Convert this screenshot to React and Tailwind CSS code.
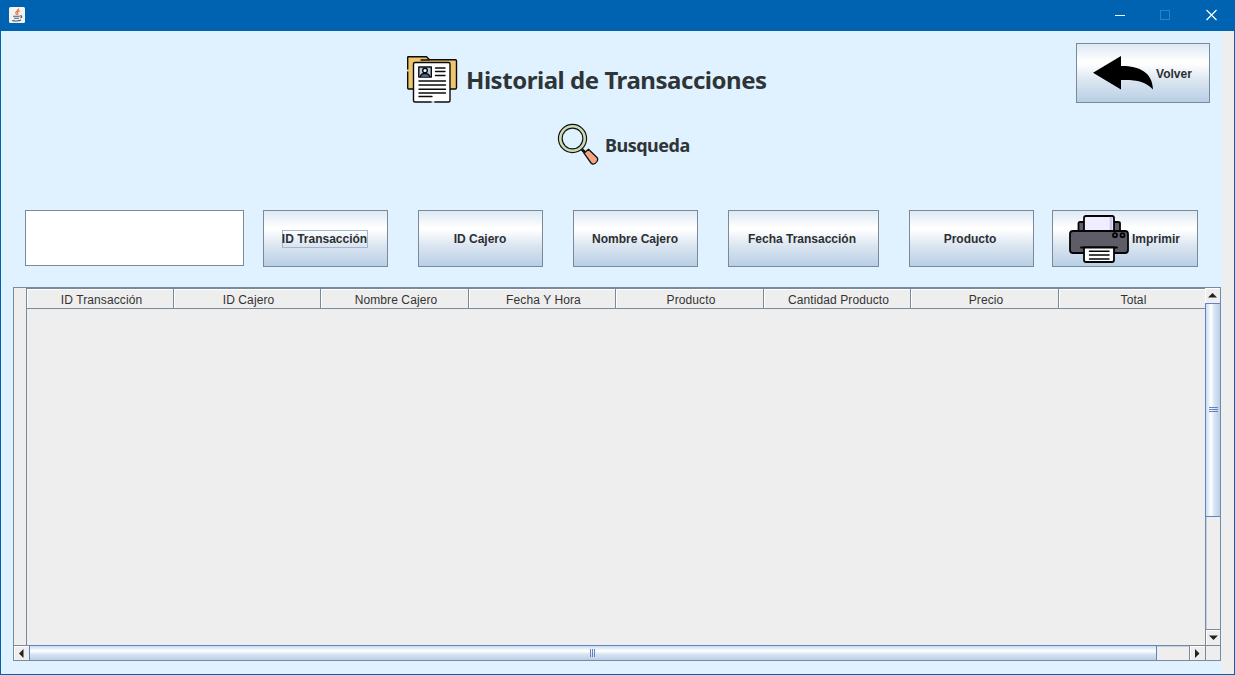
import React from "react";

const buttonBase =
  "flex shrink-0 items-center justify-center whitespace-nowrap border border-[#7a8a99] bg-[linear-gradient(to_bottom,#dde8f3_0%,#ffffff_30%,#ffffff_34%,#dce6f1_62%,#b8cfe5_100%)] text-[12px] font-bold leading-[15px] text-[#2b2f33]";

function JavaIcon() {
  return (
    <svg width="16" height="16" viewBox="0 0 16 16" fill="none" className="-mt-px">
      <rect width="16" height="16" rx="1.5" fill="#f3f3f1" />
      <path d="M9.6 1.5C10 3.6 6.3 4.2 6.7 6c.1.6.7 1 .9 1.6M11 3.8C8.400 4.800 8 5.500 8.700 6.400c.4.5.3 1-.3 1.500" stroke="#e8743b" strokeWidth="1.2" />
      <path d="M4 9.200h6.800M5 11.300h5M3.200 13.500c2 .8 6.800.7 8.800-.4M11 9c2.200-.8 2.400 1.400.3 2" stroke="#4a5f70" strokeWidth="1.100" />
    </svg>
  );
}

function FolderIcon() {
  return (
    <svg width="52" height="50" viewBox="0 0 52 50" fill="none" stroke="#0b0b0b" strokeWidth="1.4" strokeLinejoin="round" strokeLinecap="round">
      <path d="M1.700 14V2.200Q1.700 1.700 2.200 1.700H20.500L23.500 4.800H49.500Q50.500 4.800 50.500 6V32.500Q50.500 34 49.300 34H2.500Q1.700 34 1.700 33V17" fill="#efc56e" />
      <path d="M15 5H23" />
      <path d="M9 7.500H42.500Q44 7.500 44 9V45.500Q44 47 42.500 47H9Q7.500 47 7.500 45.500V9Q7.500 7.500 9 7.500Z" fill="#fff" />
      <rect x="12.800" y="12" width="12.500" height="10" fill="#b7cde0" />
      <circle cx="19" cy="15.500" r="2.300" fill="#fff" />
      <path d="M14.500 21.500Q15 18.500 19 18.500T23.500 21.500" fill="#52739c" />
      <path d="M29.500 13H39M29.500 16.500H39M29.500 20.500H39M13 26H39.500M13 30H39.500M13 34.200H39.500M13 38H39.500M13 41.500H26" />
      <path d="M26 47h2" stroke="#fff" />
    </svg>
  );
}

function MagnifierIcon() {
  return (
    <svg width="42" height="43" viewBox="0 0 42 43" fill="none" stroke="#111" strokeWidth="1.3" strokeLinejoin="round" className="-ml-px mr-px">
      <path d="M25 26.500L28 29.500" strokeWidth="3" />
      <path d="M27 30.200L31.500 26.300L40 34.500Q41.400 36 40 38.500Q38 41.500 35.500 41Q34.700 40.800 34 40Z" fill="#f5a583" />
      <circle cx="15.500" cy="15.500" r="12.200" stroke="#111" strokeWidth="4.900" />
      <circle cx="15.500" cy="15.500" r="12.200" stroke="#cbdcb4" strokeWidth="2.600" />
    </svg>
  );
}

function BackIcon() {
  return (
    <svg width="60" height="34" viewBox="0 0 60 34" fill="#000">
      <path d="M0 16.700L28 0V10C45 9.700 59.500 15.500 60 33.500C52.500 25.500 43 23.500 28 24V33.500Z" />
    </svg>
  );
}

function PrinterIcon() {
  return (
    <svg width="60" height="48" viewBox="0 0 60 48" fill="none" stroke="#050505" strokeWidth="1.800" strokeLinejoin="round" strokeLinecap="round">
      <path d="M9.500 16V8.500Q9.500 7 11 7H49Q51 7 51 8.500V16" fill="#5e5e69" />
      <path d="M15 16V3Q15 1 17 1H43Q45 1 45 3V16Z" fill="#f0edff" />
      <path d="M42 3V15" stroke="#cfc8f2" strokeWidth="2.500" />
      <path d="M4 16H56Q59 16 59 19V35Q59 38 56 38H4Q1 38 1 35V19Q1 16 4 16Z" fill="#5d5c67" />
      <circle cx="46" cy="20.200" r="2" />
      <circle cx="53.500" cy="20.200" r="2" />
      <path d="M12 32.500H48" />
      <path d="M15 32.500H45V45Q45 47 43 47H17Q15 47 15 45Z" fill="#fff" />
      <path d="M20.500 36.300H40M20.500 40H40M20.500 44H40" strokeWidth="1.500" />
    </svg>
  );
}

function Arrow({ points }) {
  return (
    <svg width="9" height="9" viewBox="0 0 9 9" fill="#222" className="shrink-0">
      <polygon points={points} />
    </svg>
  );
}

function TitleBar() {
  return (
    <header className="flex h-[31px] shrink-0 items-center justify-between bg-[#0063b1] pl-[9px] pr-[17px]">
      <JavaIcon />
      <svg width="103" height="12" viewBox="0 0 103 12" fill="none" strokeWidth="1" className="-mt-[2px]">
        <path d="M0 6.500h10" stroke="#fff" />
        <rect x="45.500" y="1.500" width="9" height="9" stroke="#2a83c9" />
        <path d="M91.500 1l10 10M101.500 1l-10 10" stroke="#fff" strokeWidth="1.200" />
      </svg>
    </header>
  );
}

const columns = [
  ["ID Transacción", "w-[147px]"],
  ["ID Cajero", "w-[147px]"],
  ["Nombre Cajero", "w-[148px]"],
  ["Fecha Y Hora", "w-[147px]"],
  ["Producto", "w-[148px]"],
  ["Cantidad Producto", "w-[147px]"],
  ["Precio", "w-[148px]"],
  ["Total", "w-[147px]"],
];

function Table() {
  return (
    <section className="ml-[13px] mt-5 flex h-[374px] w-[1208px] flex-col border border-[#7a8a99] bg-[#eeeeee]">
      <div className="flex h-[357px] shrink-0">
        <div className="w-[13px] shrink-0 border-r border-[#7a8a99]" />
        <div className="w-[1178px] shrink-0 border-t border-[#7a8a99]">
          <div className="flex h-5">
            {columns.map(([name, width]) => (
              <div
                key={name}
                className={`${width} flex shrink-0 items-center justify-center whitespace-nowrap border-b border-r border-[#7a8a99] pl-[3px] pt-[2px] text-[12px] leading-none tracking-[0.1px] text-[#333333] shadow-[inset_1px_1px_0_#ffffff]`}
              >
                {name}
              </div>
            ))}
          </div>
        </div>
        <div className="flex w-[15px] flex-col">
          <div className="flex h-[15px] shrink-0 items-center justify-center shadow-[inset_1px_1px_0_#ffffff]">
            <Arrow points="4.500,2 9,6.500 0,6.500" />
          </div>
          <div className="flex h-[214px] shrink-0 items-center justify-center border-y border-l border-[#6382bf] bg-[linear-gradient(to_right,#c8ddf2_0%,#ffffff_35%,#d7e5f3_60%,#b8cfe5_100%)]">
            <svg width="9" height="6" viewBox="0 0 9 6" stroke="#6382bf">
              <path d="M0 .5h9M0 2.500h9M0 4.500h9" />
            </svg>
          </div>
          <div className="flex-1 border-l border-[#7a8a99] shadow-[inset_1px_0_0_#c0d0e4]" />
          <div className="flex h-4 shrink-0 items-center justify-center border-l border-t border-[#7a8a99] shadow-[inset_1px_1px_0_#ffffff]">
            <Arrow points="0,2.500 9,2.500 4.500,7" />
          </div>
        </div>
      </div>
      <div className="flex h-[15px] shrink-0">
        <div className="flex w-[15px] items-center justify-center border-t border-[#7a8a99] shadow-[inset_1px_1px_0_#ffffff]">
          <Arrow points="2,4.500 6.500,0 6.500,9" />
        </div>
        <div className="flex w-[1128px] items-center justify-center border border-b-0 border-[#6382bf] bg-[linear-gradient(to_bottom,#c8ddf2_0%,#ffffff_35%,#d7e5f3_60%,#b8cfe5_100%)]">
          <svg width="6" height="8" viewBox="0 0 6 8" stroke="#6382bf">
            <path d="M.5 0v8M2.500 0v8M4.500 0v8" />
          </svg>
        </div>
        <div className="w-[32px] border-t border-[#7a8a99] shadow-[inset_0_1px_0_#c0d0e4]" />
        <div className="flex w-4 items-center justify-center border-l border-t border-[#7a8a99] shadow-[inset_1px_1px_0_#ffffff]">
          <Arrow points="2,0 6.500,4.500 2,9" />
        </div>
        <div className="flex-1 border-l border-t border-[#7a8a99]" />
      </div>
    </section>
  );
}

export default function App() {
  return (
    <div className="flex h-[675px] w-[1235px] flex-col overflow-hidden bg-[#eeeeee] font-['Liberation_Sans',Arial,sans-serif]">
      <TitleBar />
      <div className="flex flex-1 border-x border-b border-[#0063b1]">
        <main className="-ml-px w-[1222px] border-l border-[#0063b1] bg-[#e0f2ff]">
          <div className="flex h-[179px]">
            <div className="w-[1075px] pl-[405px] font-['Noto_Sans','Open_Sans',sans-serif] font-bold leading-none text-[#2f3437]">
              <div className="flex items-center gap-2 pt-6">
                <FolderIcon />
                <h1 className="whitespace-nowrap text-[24px] tracking-[-0.46px]">Historial de Transacciones</h1>
              </div>
              <div className="ml-[152px] mt-[18px] flex items-center gap-[5px]">
                <MagnifierIcon />
                <h2 className="pt-px text-[18px] tracking-[-0.5px]">Busqueda</h2>
              </div>
            </div>
            <button className={`${buttonBase} mt-3 h-[60px] w-[134px]`}>
              <BackIcon />
              <span className="ml-[3px] mr-px pt-[2px]">Volver</span>
            </button>
          </div>
          <div className="flex h-[57px] pl-6">
            <input aria-label="Busqueda" className="h-14 w-[219px] border border-[#7a8a99] bg-white outline-none" />
            <button className={`${buttonBase} ml-[19px] w-[125px]`}>
              <span className="-ml-px border border-[#a3b8cc] pt-px -indent-px">ID Transacción</span>
            </button>
            <button className={`${buttonBase} ml-[30px] w-[125px] pr-px pt-[2px]`}>ID Cajero</button>
            <button className={`${buttonBase} ml-[30px] w-[125px] pr-px pt-[2px]`}>Nombre Cajero</button>
            <button className={`${buttonBase} ml-[30px] w-[151px] pr-[3px] pt-[2px]`}>Fecha Transacción</button>
            <button className={`${buttonBase} ml-[30px] w-[125px] pr-[3px] pt-[2px]`}>Producto</button>
            <button className={`${buttonBase} ml-[18px] w-[146px]`}>
              <PrinterIcon />
              <span className="ml-[3px] mr-px pt-[2px]">Imprimir</span>
            </button>
          </div>
          <div className="-ml-px">
            <Table />
          </div>
        </main>
      </div>
    </div>
  );
}
